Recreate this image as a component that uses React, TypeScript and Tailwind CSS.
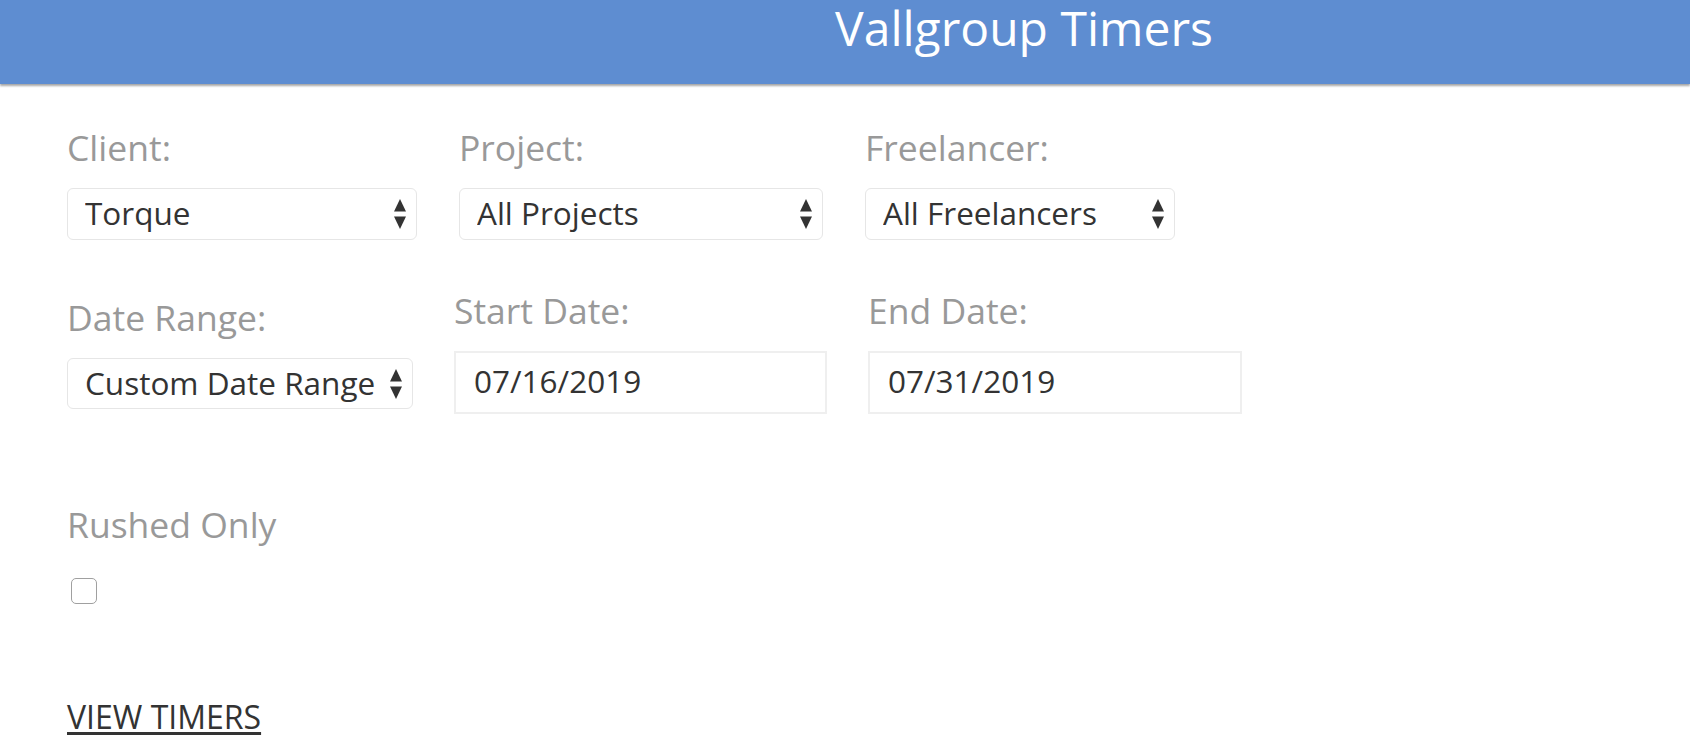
import type { ReactNode } from "react";

const FONT = "font-['Open_Sans','Liberation_Sans',sans-serif]";

function Arrows() {
  return (
    <svg width="12" height="30" viewBox="0 0 12 30" className="pointer-events-none absolute right-[11px] top-1/2 -translate-y-1/2">
      <path d="M6 0 L12 12.5 L0 12.5 Z" fill="#333" />
      <path d="M6 30 L12 17.5 L0 17.5 Z" fill="#333" />
    </svg>
  );
}

function Field({ label, width, children, className = "" }: { label: string; width: string; children: ReactNode; className?: string }) {
  return (
    <div className={`flex flex-col ${width} ${className}`}>
      <label className="text-[35.5px] leading-none text-[#999]">{label}</label>
      {children}
    </div>
  );
}

function Select({ value, h = "h-[52px]", mt = "mt-[22px]" }: { value: string; h?: string; mt?: string }) {
  return (
    <div className={`relative ${mt}`}>
      <select
        defaultValue={value}
        className={`${h} w-full appearance-none rounded-[6px] border border-[#e6e6e6] bg-white pt-0 pb-[4px] pl-[17px] pr-[30px] text-[31.5px] leading-normal text-[#333] outline-none`}
      >
        <option>{value}</option>
      </select>
      <Arrows />
    </div>
  );
}

function DateInput({ value }: { value: string }) {
  return (
    <input
      defaultValue={value}
      className="mt-[23px] h-[63px] w-full border-2 border-[#efefef] bg-white pb-[4px] pl-[18px] text-[31.5px] leading-normal text-[#333] outline-none"
    />
  );
}

export default function App() {
  return (
    <div className={`min-h-[742px] bg-white ${FONT}`}>
      <header className="h-[84px] bg-[#5e8dd1] pl-[358px] pt-[2px] shadow-[0_2px_2px_rgba(0,0,0,0.35)]">
        <h1 className="text-center text-[48px] leading-[1.1] text-white">Vallgroup Timers</h1>
      </header>

      <main className="pl-[67px] pt-[46px]">
        <div className="flex gap-[42px]">
          <Field label="Client:" width="w-[350px]">
            <Select value="Torque" />
          </Field>
          <Field label="Project:" width="w-[364px]">
            <Select value="All Projects" />
          </Field>
          <Field label="Freelancer:" width="w-[310px]">
            <Select value="All Freelancers" />
          </Field>
        </div>

        <div className="mt-[53px] flex items-start gap-[41px]">
          <Field label="Date Range:" width="w-[346px]" className="mt-[7px]">
            <Select value="Custom Date Range" h="h-[51px]" mt="mt-[23px]" />
          </Field>
          <Field label="Start Date:" width="w-[373px]">
            <DateInput value="07/16/2019" />
          </Field>
          <Field label="End Date:" width="w-[374px]">
            <DateInput value="07/31/2019" />
          </Field>
        </div>

        <div className="mt-[93px] flex flex-col">
          <span className="text-[35.5px] leading-none text-[#999]">Rushed Only</span>
          <input
            type="checkbox"
            className="ml-[4px] mt-[35px] h-[26px] w-[26px] appearance-none rounded-[5px] border border-[#a0a0a0] bg-white"
          />
        </div>

        <a href="#" className="mt-[97px] inline-block text-[32px] leading-none text-[#333] underline underline-offset-[3px]">
          VIEW TIMERS
        </a>
      </main>
    </div>
  );
}
